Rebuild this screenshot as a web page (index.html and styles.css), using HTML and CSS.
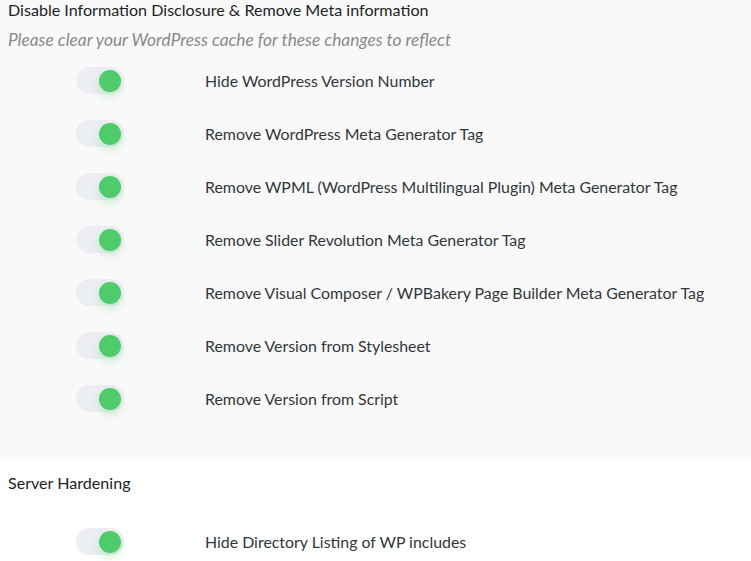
FILE: index.html
```html
<!DOCTYPE html>
<html>
<head>
<meta charset="utf-8">
<link rel="stylesheet" href="styles.css">
</head>
<body>
<section class="panel panel-gray">
  <h2 class="panel-title">Disable Information Disclosure &amp; Remove Meta information</h2>
  <p class="panel-note">Please clear your WordPress cache for these changes to reflect</p>
  <ul class="opts">
    <li class="opt"><span class="toggle"><span class="knob"></span></span><span class="label">Hide WordPress Version Number</span></li>
    <li class="opt"><span class="toggle"><span class="knob"></span></span><span class="label">Remove WordPress Meta Generator Tag</span></li>
    <li class="opt"><span class="toggle"><span class="knob"></span></span><span class="label">Remove WPML (WordPress Multilingual Plugin) Meta Generator Tag</span></li>
    <li class="opt"><span class="toggle"><span class="knob"></span></span><span class="label">Remove Slider Revolution Meta Generator Tag</span></li>
    <li class="opt"><span class="toggle"><span class="knob"></span></span><span class="label">Remove Visual Composer / WPBakery Page Builder Meta Generator Tag</span></li>
    <li class="opt"><span class="toggle"><span class="knob"></span></span><span class="label">Remove Version from Stylesheet</span></li>
    <li class="opt"><span class="toggle"><span class="knob"></span></span><span class="label">Remove Version from Script</span></li>
  </ul>
</section>
<section class="panel panel-white">
  <h2 class="panel-title">Server Hardening</h2>
  <ul class="opts opts-2">
    <li class="opt"><span class="toggle"><span class="knob"></span></span><span class="label">Hide Directory Listing of WP includes</span></li>
  </ul>
</section>
</body>
</html>
```
FILE: styles.css
```css
html, body {
  margin: 0;
  padding: 0;
  background: #ffffff;
}
body {
  font-family: Lato, "Open Sans", sans-serif;
  color: #23282d;
  font-size: 16px;
}
.panel {
  padding: 0 8px;
}
.panel-gray {
  background: #f9f9f9;
  height: 460px;
  box-sizing: border-box;
}
.panel-title {
  margin: 0;
  font-size: 16.1px;
  font-weight: 400;
  line-height: 19px;
  color: #1d2327;
}
.panel-white .panel-title {
  padding-top: 13px;
}
.panel-note {
  margin: 10px 0 0;
  font-size: 17.3px;
  line-height: 21px;
  font-style: italic;
  color: #8a8a8a;
}
.opts {
  list-style: none;
  margin: 4px 0 0;
  padding: 0;
}
.opts-2 {
  margin-top: 23px;
}
.opt {
  display: flex;
  align-items: center;
  height: 53px;
  padding-left: 68px;
}
.toggle {
  width: 48px;
  height: 27px;
  border-radius: 14px;
  background: #eceef3;
  display: flex;
  align-items: center;
  justify-content: flex-end;
  padding-right: 3px;
  box-sizing: border-box;
  flex: none;
}
.knob {
  width: 22px;
  height: 22px;
  border-radius: 50%;
  background: #4fcb6c;
  box-shadow: 0 4px 8px rgba(79, 203, 108, 0.3);
}
.label {
  margin-left: 81px;
  font-size: 15.9px;
  color: #32373c;
}
```
